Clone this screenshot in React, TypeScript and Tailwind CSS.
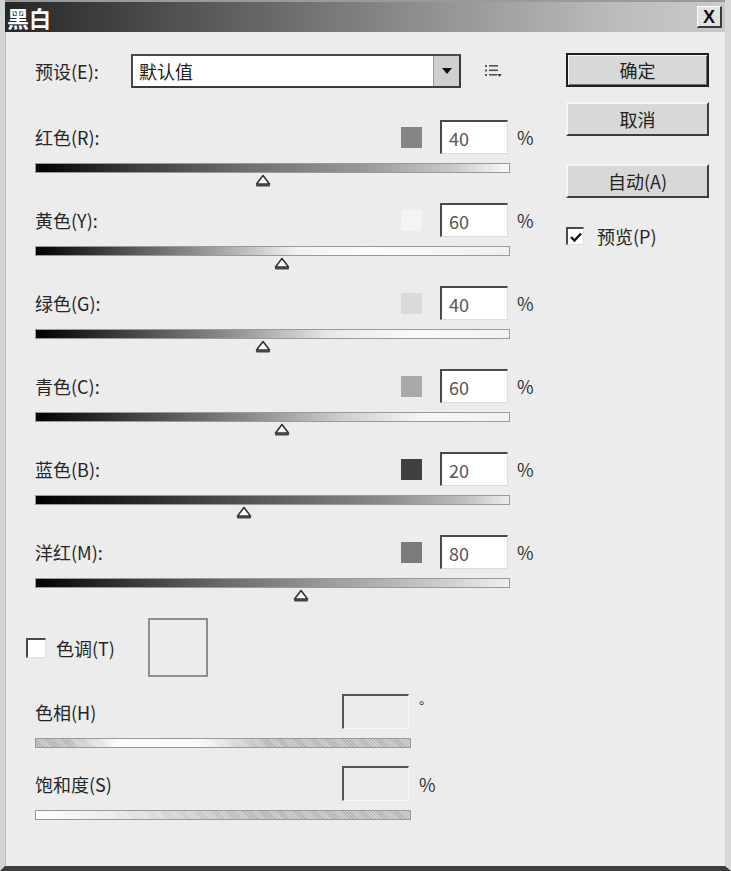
import React from "react";

type Row = { label: string; value: number; swatch: string; bar: string };

const rows: Row[] = [
  { label: "红色(R):", value: 40, swatch: "bg-[#858585]", bar: "bg-[linear-gradient(90deg,#000_0%,#3a3a3a_20%,#707070_45%,#9a9a9a_70%,#c8c8c8_88%,#fafafa_100%)]" },
  { label: "黄色(Y):", value: 60, swatch: "bg-[#f4f4f4]", bar: "bg-[linear-gradient(90deg,#000_0%,#555_20%,#a0a0a0_38%,#f2f2f2_55%,#fbfbfb_70%,#f0f0f0_100%)]" },
  { label: "绿色(G):", value: 40, swatch: "bg-[#dadada]", bar: "bg-[linear-gradient(90deg,#000_0%,#444_20%,#8a8a8a_40%,#e8e8e8_62%,#fafafa_80%,#f2f2f2_100%)]" },
  { label: "青色(C):", value: 60, swatch: "bg-[#a9a9a9]", bar: "bg-[linear-gradient(90deg,#000_0%,#454545_22%,#8a8a8a_45%,#cfcfcf_65%,#f6f6f6_82%,#f2f2f2_100%)]" },
  { label: "蓝色(B):", value: 20, swatch: "bg-[#404040]", bar: "bg-[linear-gradient(90deg,#000_0%,#2e2e2e_25%,#5e5e5e_50%,#8e8e8e_75%,#bdbdbd_90%,#ececec_100%)]" },
  { label: "洋红(M):", value: 80, swatch: "bg-[#7b7b7b]", bar: "bg-[linear-gradient(90deg,#000_0%,#333_18%,#6a6a6a_40%,#9c9c9c_62%,#c4c4c4_82%,#efefef_100%)]" },
];

function Thumb() {
  return (
    <svg width="18" height="14" viewBox="0 0 18 14">
      <path d="M9 1.5 L15.5 10 L2.5 10 Z" fill="#fff" stroke="#333" strokeWidth="1.6" strokeLinejoin="round" />
      <rect x="2" y="10" width="14" height="2.6" rx="1" fill="#444" />
    </svg>
  );
}

function SliderRow({ row }: { row: Row }) {
  const pct = (row.value + 200) / 500;
  return (
    <div className="flex flex-col mb-[16px]">
      <div className="flex items-center h-[34px]">
        <span className="w-[366px] text-[18px] leading-none">{row.label}</span>
        <div className={`w-[21px] h-[21px] ${row.swatch}`} />
        <div className="ml-[18px] w-[68px] h-[34px] bg-white border-t-2 border-l-2 border-t-[#4a4a4a] border-l-[#4a4a4a] border-b border-r border-b-[#dcdcdc] border-r-[#dcdcdc] flex items-center pl-[7px] text-[18px] text-[#555] leading-none">
          {row.value}
        </div>
        <span className="ml-[9px] text-[18px] text-[#333] leading-none">%</span>
      </div>
      <div className={`mt-[9px] h-[10px] w-[475px] border border-[#9a9a9a] ${row.bar}`} />
      <div className="relative h-[14px] w-[475px]">
        <div className="absolute top-[1px] -translate-x-1/2" style={{ left: `${pct * 100}%` }}>
          <Thumb />
        </div>
      </div>
    </div>
  );
}

function Button({ label, primary }: { label: string; primary?: boolean }) {
  return (
    <div
      className={`w-[143px] h-[34px] flex items-center justify-center text-[18px] leading-none text-[#222] bg-[#d8d8d8] ${
        primary
          ? "border-2 border-[#1e1e1e] shadow-[inset_1px_1px_0_#f6f6f6,inset_-1px_-1px_0_#707070]"
          : "border-t-2 border-l-2 border-t-[#f6f6f6] border-l-[#f6f6f6] border-b-2 border-r-2 border-b-[#3c3c3c] border-r-[#3c3c3c]"
      }`}
    >
      {label}
    </div>
  );
}

export default function App() {
  return (
    <div className="w-[731px] h-[871px] bg-[#ececec] flex flex-col overflow-hidden border-l-[5px] border-l-[#d4d4d4] border-r-[6px] border-r-[#d8d8d8] border-b-[5px] border-b-[#3e3e3e] font-['Noto_Sans_CJK_SC','Noto_Sans',sans-serif] text-[#262626]">
      {/* Title bar */}
      <div className="h-[32px] flex items-center justify-between bg-[linear-gradient(90deg,#262626_0%,#4a4a4a_20%,#8a8a8a_55%,#bcbcbc_85%,#cacaca_100%)] border-t-2 border-t-[#9a9a9a] pl-[2px] pr-[3px]">
        <span className="text-white font-bold text-[22px] leading-none">黑白</span>
        <div className="w-[25px] h-[22px] bg-[#e2e2e2] border-t border-l border-t-white border-l-white border-b-2 border-r-2 border-b-[#3a3a3a] border-r-[#3a3a3a] flex items-center justify-center text-[18px] font-bold leading-none text-[#111] font-['Liberation_Sans',sans-serif]">
          X
        </div>
      </div>

      {/* Body */}
      <div className="flex flex-1 pt-[21px] pl-[29px] border-l border-l-[#bdbdbd]">
        {/* Left column */}
        <div className="w-[531px] flex flex-col">
          <div className="flex items-center h-[34px] mt-[1px]">
            <span className="w-[96px] text-[18px] leading-none">预设(E):</span>
            <div className="w-[330px] h-[34px] bg-white border-t-2 border-l-2 border-t-[#4a4a4a] border-l-[#4a4a4a] border-b-2 border-r-2 border-b-[#3a3a3a] border-r-[#3a3a3a] flex items-center">
              <span className="flex-1 pl-[6px] text-[18px] leading-none text-[#222]">默认值</span>
              <div className="w-[26px] h-full bg-[#cfcfcf] border-l border-l-[#a0a0a0] flex items-center justify-center">
                <svg width="10" height="6" viewBox="0 0 10 6"><path d="M0 0 L10 0 L5 6 Z" fill="#111" /></svg>
              </div>
            </div>
            <svg className="ml-[24px]" width="18" height="14" viewBox="0 0 18 14">
              <rect x="0" y="1" width="2" height="2" fill="#555" />
              <rect x="4" y="1" width="9" height="1.6" fill="#555" />
              <rect x="0" y="5.5" width="2" height="2" fill="#555" />
              <rect x="4" y="5.5" width="9" height="1.6" fill="#555" />
              <rect x="0" y="10" width="2" height="2" fill="#555" />
              <rect x="4" y="10" width="8" height="1.6" fill="#555" />
              <path d="M12 10 L17 10 L14.5 13 Z" fill="#444" />
            </svg>
          </div>

          <div className="mt-[32px] flex flex-col">
            {rows.map((r) => (
              <SliderRow key={r.label} row={r} />
            ))}
          </div>

          {/* Tint */}
          <div className="flex items-center -ml-[9px]">
            <div className="w-[20px] h-[20px] bg-white border-t-2 border-l-2 border-t-[#4a4a4a] border-l-[#4a4a4a] border-b border-r border-b-[#e0e0e0] border-r-[#e0e0e0]" />
            <span className="ml-[10px] text-[18px] leading-none">色调(T)</span>
            <div className="ml-[33px] w-[60px] h-[59px] border-2 border-[#8e8e8e]" />
          </div>

          {/* Hue */}
          <div className="mt-[17px] flex items-center h-[35px]">
            <span className="w-[307px] text-[18px] leading-none">色相(H)</span>
            <div className="w-[67px] h-[35px] border-t-2 border-l-2 border-t-[#555] border-l-[#555] border-b border-r border-b-[#f8f8f8] border-r-[#f8f8f8]" />
            <span className="ml-[10px] -mt-[12px] text-[14px] leading-none text-[#333]">°</span>
          </div>
          <div className="mt-[9px] h-[10px] w-[376px] border border-[#9a9a9a] bg-[linear-gradient(90deg,rgba(255,255,255,0)_8%,rgba(255,255,255,0.95)_22%,rgba(255,255,255,0.9)_44%,rgba(255,255,255,0)_62%),repeating-linear-gradient(45deg,#b2b2b2_0px,#b2b2b2_1px,#d2d2d2_1px,#d2d2d2_2px)]" />

          {/* Saturation */}
          <div className="mt-[18px] flex items-center h-[35px]">
            <span className="w-[307px] text-[18px] leading-none">饱和度(S)</span>
            <div className="w-[67px] h-[35px] border-t-2 border-l-2 border-t-[#555] border-l-[#555] border-b border-r border-b-[#f8f8f8] border-r-[#f8f8f8]" />
            <span className="ml-[10px] text-[18px] leading-none text-[#333]">%</span>
          </div>
          <div className="mt-[9px] h-[10px] w-[376px] border border-[#9a9a9a] bg-[linear-gradient(90deg,rgba(255,255,255,1)_0%,rgba(255,255,255,0.7)_20%,rgba(255,255,255,0.2)_45%,rgba(255,255,255,0)_60%),repeating-linear-gradient(45deg,#b2b2b2_0px,#b2b2b2_1px,#d2d2d2_1px,#d2d2d2_2px)]" />
        </div>

        {/* Right column */}
        <div className="w-[143px] flex flex-col">
          <Button label="确定" primary />
          <div className="mt-[15px]"><Button label="取消" /></div>
          <div className="mt-[28px]"><Button label="自动(A)" /></div>
          <div className="mt-[29px] flex items-center">
            <div className="w-[18px] h-[18px] bg-white border-t-2 border-l-2 border-t-[#4a4a4a] border-l-[#4a4a4a] border-b border-r border-b-[#e0e0e0] border-r-[#e0e0e0] flex items-center justify-center">
              <svg width="12" height="10" viewBox="0 0 12 10"><path d="M1 5 L4.5 8.5 L11 1.5" fill="none" stroke="#111" strokeWidth="2.4" /></svg>
            </div>
            <span className="ml-[13px] text-[18px] leading-none">预览(P)</span>
          </div>
        </div>
      </div>
    </div>
  );
}
